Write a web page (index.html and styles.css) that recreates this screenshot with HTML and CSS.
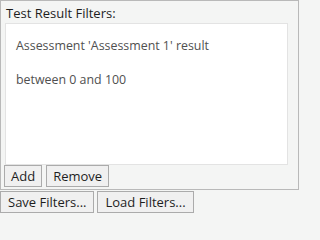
FILE: index.html
```html
<!DOCTYPE html>
<html>
<head>
<meta charset="utf-8">
<link rel="stylesheet" href="styles.css">
</head>
<body>
<div class="panel">
  <div class="title">Test Result Filters:</div>
  <div class="list">
    <div class="item">Assessment 'Assessment 1' result</div>
    <div class="item">between 0 and 100</div>
  </div>
  <div class="row inner">
    <button class="btn">Add</button>
    <button class="btn">Remove</button>
  </div>
</div>
<div class="row outer">
  <button class="btn wide">Save Filters...</button>
  <button class="btn wide">Load Filters...</button>
</div>
</body>
</html>
```
FILE: styles.css
```css
html, body {
  margin: 0;
  padding: 0;
  background: #f4f5f4;
  font-family: "Open Sans", "Noto Sans", sans-serif;
}
body {
  width: 300px;
  height: 219px;
  overflow: hidden;
}
.panel {
  width: 293px;
  height: 188px;
  border: 1px solid #b9b9b9;
  padding: 0 0 0 4px;
}
.title {
  font-size: 13px;
  color: #1e1e1e;
  height: 21px;
  line-height: 22px;
  padding: 1px 0 0 1px;
}
.list {
  width: 281px;
  height: 140px;
  background: #fff;
  border: 1px solid #e3e3e3;
}
.item {
  font-size: 12.4px;
  color: #505050;
  padding-left: 10px;
  height: 34px;
  line-height: 34px;
}
.item:first-child {
  margin-top: 5px;
}
.row {
  display: flex;
  gap: 4px;
}
.inner {
  margin-left: -1px;
}
.outer {
  margin-top: 1px;
  gap: 3px;
}
.btn {
  font-family: inherit;
  font-size: 13px;
  color: #1e1e1e;
  background: #f0f0f0;
  border: 1px solid #ababab;
  border-radius: 0;
  height: 22px;
  line-height: 20px;
  padding: 0 6px;
  margin: 0;
}
.wide {
  padding: 0 7px;
}
```
